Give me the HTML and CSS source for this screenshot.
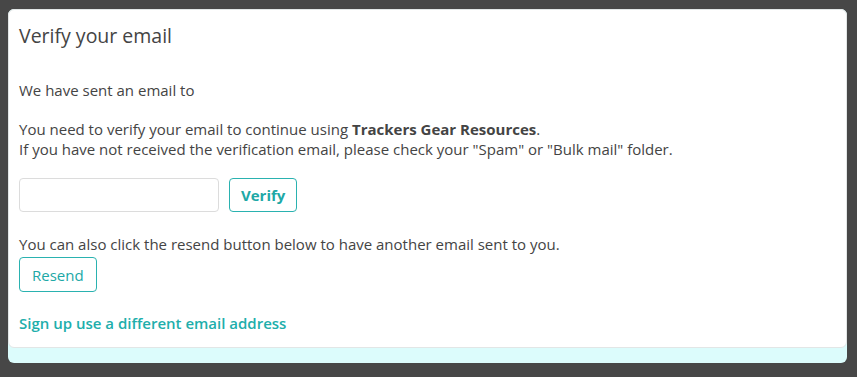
FILE: index.html
```html
<!DOCTYPE html>
<html>
<head>
<meta charset="utf-8">
<link rel="stylesheet" href="styles.css">
</head>
<body>
<div class="panel">
  <div class="card">
    <h1 class="title">Verify your email</h1>
    <p class="sent">We have sent an email to</p>
    <p class="info">You need to verify your email to continue using <strong>Trackers Gear Resources</strong>.<br>If you have not received the verification email, please check your "Spam" or "Bulk mail" folder.</p>
    <div class="form-row">
      <input class="code-input" type="text">
      <button class="btn btn-bold">Verify</button>
    </div>
    <p class="resend-text">You can also click the resend button below to have another email sent to you.</p>
    <button class="btn btn-resend">Resend</button>
    <a class="signup-link" href="#">Sign up use a different email address</a>
  </div>
</div>
</body>
</html>
```
FILE: styles.css
```css
html, body {
  margin: 0;
  padding: 0;
}
body {
  background: #474747;
  font-family: "Open Sans", "Liberation Sans", sans-serif;
  color: #444;
  font-size: 15px;
  line-height: 20px;
  padding: 9px 10px 0 8px;
  height: 377px;
  box-sizing: border-box;
}
.panel {
  background: #dcfcfc;
  border-radius: 6px;
  padding-bottom: 15px;
}
.card {
  background: #fff;
  border: 1px solid #e2e6e6;
  border-radius: 6px;
  padding: 14px 10px 14px 10px;
  display: flex;
  flex-direction: column;
  align-items: flex-start;
}
.title {
  margin: 0;
  font-size: 19.5px;
  line-height: 24px;
  font-weight: 500;
  color: #444;
}
.sent {
  margin: 32px 0 0 0;
}
.info {
  margin: 19px 0 0 0;
}
.info strong {
  font-weight: 700;
}
.form-row {
  display: flex;
  gap: 10px;
  margin-top: 19px;
}
.code-input {
  width: 200px;
  height: 34px;
  box-sizing: border-box;
  border: 1px solid #dcdcdc;
  border-radius: 4px;
  margin: 0;
}
.btn {
  font-family: "Open Sans", "Liberation Sans", sans-serif;
  font-size: 15px;
  background: #fff;
  color: #20a8a6;
  border: 1px solid #2ab2b0;
  border-radius: 4px;
  height: 34px;
  padding: 0 12px;
  margin: 0;
  box-sizing: border-box;
}
.btn-bold {
  font-weight: 700;
  padding: 0 11px;
}
.resend-text {
  margin: 22px 0 0 0;
}
.btn-resend {
  margin-top: 3px;
  height: 35px;
}
.signup-link {
  margin-top: 21px;
  color: #20aeab;
  font-weight: 600;
  text-decoration: none;
}
```
